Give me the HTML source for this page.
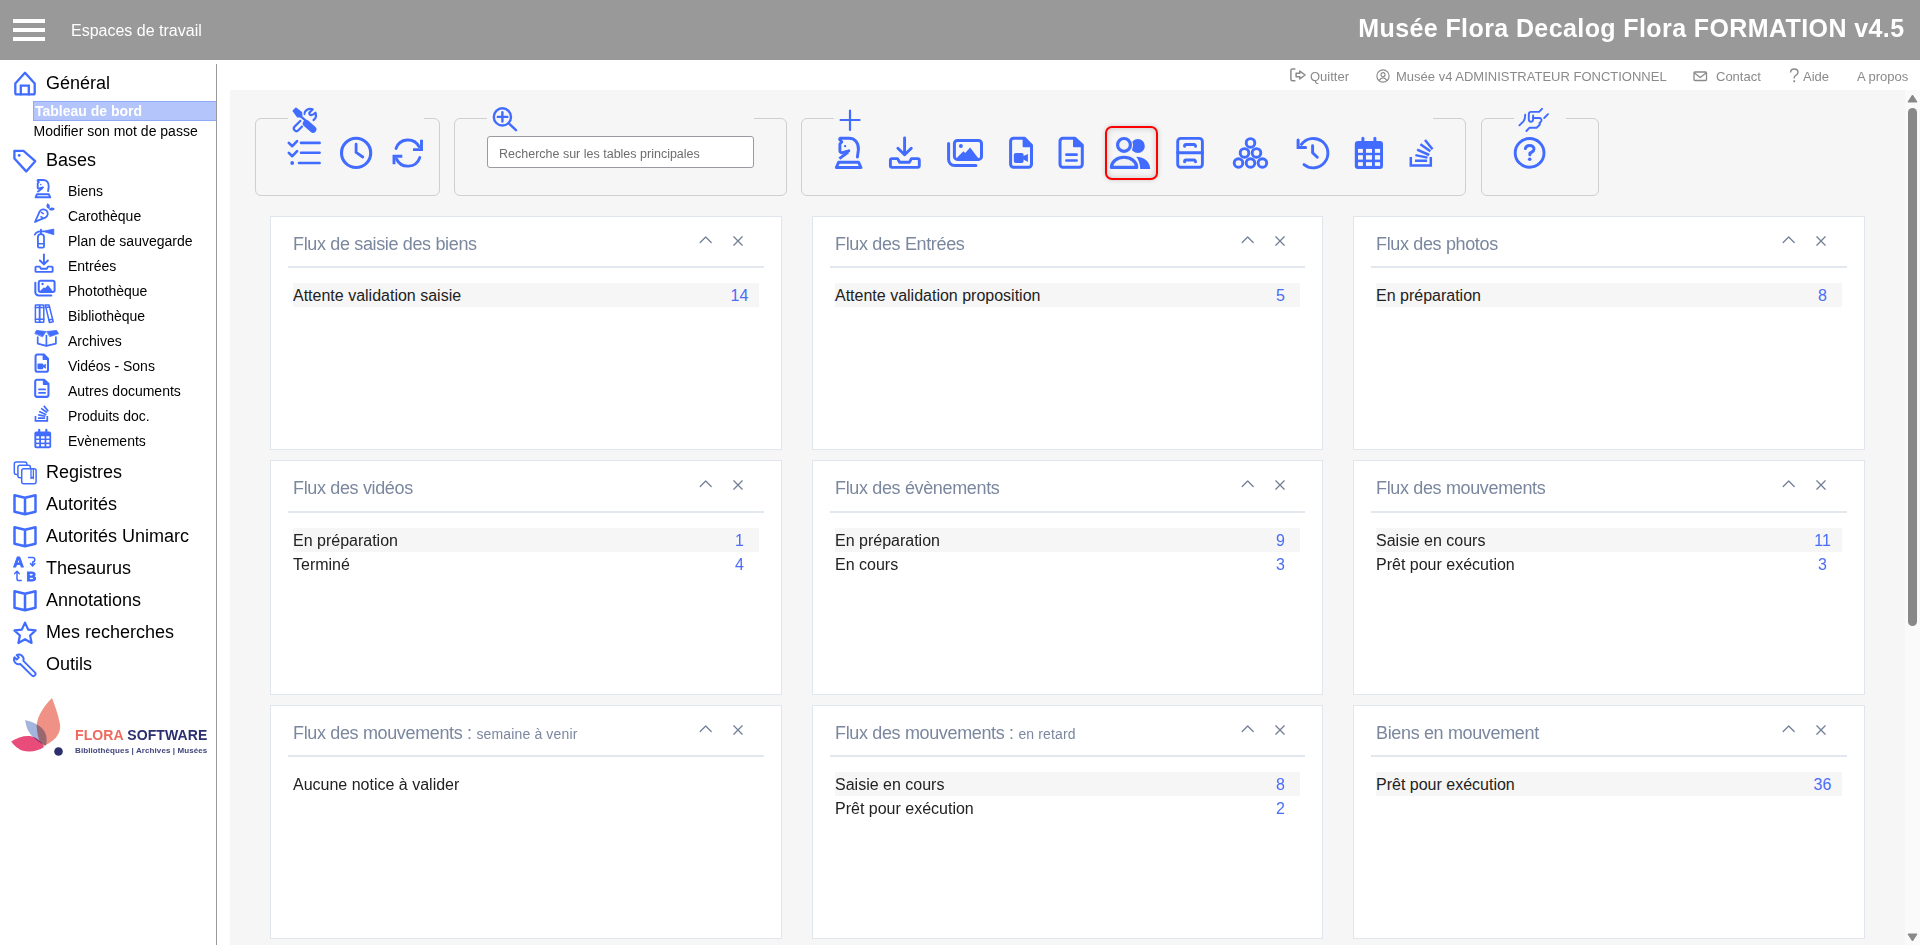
<!DOCTYPE html><html><head><meta charset="utf-8"><title>Flora</title><style>
*{margin:0;padding:0;box-sizing:border-box}
html,body{width:1920px;height:945px;overflow:hidden;background:#fff;font-family:"Liberation Sans", sans-serif}
.a{position:absolute}
</style></head><body>
<div class="a" style="left:0;top:0;width:1920px;height:60px;background:#999"></div>
<div class="a" style="left:13px;top:19px;width:32px;height:4px;background:#fff"></div>
<div class="a" style="left:13px;top:28px;width:32px;height:4px;background:#fff"></div>
<div class="a" style="left:13px;top:37px;width:32px;height:4px;background:#fff"></div>
<div style="position:absolute;left:71px;top:23.46px;font-size:16px;line-height:16px;color:#fff;font-weight:normal;white-space:nowrap;">Espaces de travail</div>
<div class="a" style="right:15.5px;top:16.4px;font-size:25px;line-height:25px;font-weight:bold;color:#fff;white-space:nowrap;letter-spacing:0.4px">Musée Flora Decalog Flora FORMATION v4.5</div>
<div style="position:absolute;left:1310px;top:70.00px;font-size:13px;line-height:13px;color:#8a8a8a;font-weight:normal;white-space:nowrap;">Quitter</div>
<div style="position:absolute;left:1396px;top:70.00px;font-size:13px;line-height:13px;color:#8a8a8a;font-weight:normal;white-space:nowrap;">Musée v4 ADMINISTRATEUR FONCTIONNEL</div>
<div style="position:absolute;left:1716px;top:70.00px;font-size:13px;line-height:13px;color:#8a8a8a;font-weight:normal;white-space:nowrap;">Contact</div>
<div style="position:absolute;left:1803px;top:70.00px;font-size:13px;line-height:13px;color:#8a8a8a;font-weight:normal;white-space:nowrap;">Aide</div>
<div style="position:absolute;left:1857px;top:70.00px;font-size:13px;line-height:13px;color:#8a8a8a;font-weight:normal;white-space:nowrap;">A propos</div>
<svg class="a" style="left:0;top:0" width="1920" height="100" viewBox="0 0 1920 100" fill="none" stroke="#8a8a8a" stroke-width="1.4"><path d="M1790.6 72.4C1790.6 70.2 1792.2 69 1794.3 69C1796.5 69 1798 70.4 1798 72.3C1798 74.6 1795.9 75.2 1794.6 76.4C1794.2 76.8 1794.2 77.6 1794.2 78.6"/><path d="M1794.2 80.3V82.2" stroke-width="1.8"/></svg>
<svg class="a" style="left:1280px;top:60px" width="40" height="30" viewBox="1280 60 40 30" fill="none" stroke="#8a8a8a" stroke-width="1.5" stroke-linejoin="round"><path d="M1295.4 69H1292.4A1.5 1.5 0 0 0 1290.9 70.5V79.3A1.5 1.5 0 0 0 1292.4 80.8H1295.4"/><path d="M1296.1 73.3H1299.8V71.1L1305.1 75L1299.8 78.9V76.7H1296.1z"/></svg>
<svg style="position:absolute;left:1376px;top:69.3px" width="14" height="14" viewBox="0 0 16 16" fill="none" stroke="#8a8a8a" stroke-width="1.3" stroke-linecap="round" stroke-linejoin="round" ><circle cx="8" cy="8" r="7"/><circle cx="8" cy="6.5" r="2.3"/><path d="M3.8 13c1-2 2.4-2.8 4.2-2.8s3.2.8 4.2 2.8"/></svg>
<svg style="position:absolute;left:1693px;top:71px" width="14.5" height="10.5" viewBox="0 0 14.5 10.5" fill="none" stroke="#8a8a8a" stroke-width="1.3" stroke-linecap="round" stroke-linejoin="round" ><rect x="1" y="1" width="12.5" height="8.5" rx="1"/><path d="M1.5 2l5.75 4.5 5.75-4.5"/></svg>
<div class="a" style="left:216px;top:64px;width:1px;height:881px;background:#999"></div>
<div class="a" style="left:33px;top:101px;width:183px;height:20px;background:#b4c5fb;border:1px solid #8eaaf8;border-right:none"></div>
<div style="position:absolute;left:46px;top:73.76px;font-size:18px;line-height:18px;color:#000;font-weight:normal;white-space:nowrap;">Général</div>
<div style="position:absolute;left:35px;top:103.75px;font-size:14px;line-height:14px;color:#fff;font-weight:bold;white-space:nowrap;">Tableau de bord</div>
<div style="position:absolute;left:33.5px;top:124.15px;font-size:14px;line-height:14px;color:#000;font-weight:normal;white-space:nowrap;">Modifier son mot de passe</div>
<div style="position:absolute;left:46px;top:150.76px;font-size:18px;line-height:18px;color:#000;font-weight:normal;white-space:nowrap;">Bases</div>
<div style="position:absolute;left:68px;top:184.15px;font-size:14px;line-height:14px;color:#000;font-weight:normal;white-space:nowrap;">Biens</div>
<div style="position:absolute;left:68px;top:209.15px;font-size:14px;line-height:14px;color:#000;font-weight:normal;white-space:nowrap;">Carothèque</div>
<div style="position:absolute;left:68px;top:234.15px;font-size:14px;line-height:14px;color:#000;font-weight:normal;white-space:nowrap;">Plan de sauvegarde</div>
<div style="position:absolute;left:68px;top:259.15px;font-size:14px;line-height:14px;color:#000;font-weight:normal;white-space:nowrap;">Entrées</div>
<div style="position:absolute;left:68px;top:284.15px;font-size:14px;line-height:14px;color:#000;font-weight:normal;white-space:nowrap;">Photothèque</div>
<div style="position:absolute;left:68px;top:309.15px;font-size:14px;line-height:14px;color:#000;font-weight:normal;white-space:nowrap;">Bibliothèque</div>
<div style="position:absolute;left:68px;top:334.15px;font-size:14px;line-height:14px;color:#000;font-weight:normal;white-space:nowrap;">Archives</div>
<div style="position:absolute;left:68px;top:359.15px;font-size:14px;line-height:14px;color:#000;font-weight:normal;white-space:nowrap;">Vidéos - Sons</div>
<div style="position:absolute;left:68px;top:384.15px;font-size:14px;line-height:14px;color:#000;font-weight:normal;white-space:nowrap;">Autres documents</div>
<div style="position:absolute;left:68px;top:409.15px;font-size:14px;line-height:14px;color:#000;font-weight:normal;white-space:nowrap;">Produits doc.</div>
<div style="position:absolute;left:68px;top:434.15px;font-size:14px;line-height:14px;color:#000;font-weight:normal;white-space:nowrap;">Evènements</div>
<div style="position:absolute;left:46px;top:462.76px;font-size:18px;line-height:18px;color:#000;font-weight:normal;white-space:nowrap;">Registres</div>
<div style="position:absolute;left:46px;top:494.76px;font-size:18px;line-height:18px;color:#000;font-weight:normal;white-space:nowrap;">Autorités</div>
<div style="position:absolute;left:46px;top:526.76px;font-size:18px;line-height:18px;color:#000;font-weight:normal;white-space:nowrap;">Autorités Unimarc</div>
<div style="position:absolute;left:46px;top:558.76px;font-size:18px;line-height:18px;color:#000;font-weight:normal;white-space:nowrap;">Thesaurus</div>
<div style="position:absolute;left:46px;top:590.76px;font-size:18px;line-height:18px;color:#000;font-weight:normal;white-space:nowrap;">Annotations</div>
<div style="position:absolute;left:46px;top:622.76px;font-size:18px;line-height:18px;color:#000;font-weight:normal;white-space:nowrap;">Mes recherches</div>
<div style="position:absolute;left:46px;top:654.76px;font-size:18px;line-height:18px;color:#000;font-weight:normal;white-space:nowrap;">Outils</div>
<svg class="a" style="left:0;top:0" width="240" height="700" viewBox="0 0 240 700" fill="none" stroke="#416cff" stroke-linecap="round" stroke-linejoin="round"><path d="M15.3 83.6L25 72.8L34.7 83.6V93A1.4 1.4 0 0 1 33.3 94.4H16.7A1.4 1.4 0 0 1 15.3 93z" stroke-width="2.3"/><path d="M20.8 94.4V85.6H28.8V94.4" stroke-width="2.3" stroke-linejoin="miter"/><path d="M14.4 150.8H23.5L35.2 161.2L26.2 171.4L14.4 158.5z" stroke-width="2.3"/><circle cx="19.2" cy="155.4" r="1.4" fill="#416cff" stroke="none"/><g transform="translate(-461.190 97.822) scale(0.594)"><g transform="translate(830 132)"><path d="M8.6 30.3H28.6L31 35.5H6.3z" stroke-width="3.19"/><path d="M27.4 25L28.4 17.5C28.8 10.5 24.5 6.3 19 6.3H10.2L9.6 7.3L11.8 9.9L9.9 12V18.8C9.9 20.3 11 21 12.5 20.7L18.8 18.8" stroke-width="3.19"/><path d="M18.2 20L9.4 26.6" stroke-width="3.19" stroke-linecap="butt"/><circle cx="15.1" cy="14.1" r="1.32" fill="#416cff" stroke="none"/></g></g><g transform="translate(30 200)"><path d="M5 22C8 20.5 12 19 15.3 17.6C18 16.3 18.6 12.8 16.6 10.6C14.5 8.5 10.8 9 9.6 11.6z" stroke-width="1.8"/><path d="M11.4 12.4L13.3 13.6M10.9 16.8L12.4 17.4" stroke-width="1.5"/><path d="M17.6 4C16.6 5.4 16.8 7.6 18.9 8.3C19.6 6.6 19.2 5 17.6 4z" fill="#416cff" stroke="#416cff" stroke-width="1.2"/><path d="M19.6 9.2C21 10.4 23 10.2 24 9C23 7.9 21 8 19.6 9.2z" fill="#416cff" stroke="#416cff" stroke-width="1.2"/></g><g transform="translate(30 200)"><path d="M7.9 46.4V37.2A3.05 3.05 0 0 1 14 37.2V46.4A1.2 1.2 0 0 1 12.8 47.6H9.1A1.2 1.2 0 0 1 7.9 46.4z" stroke-width="1.8"/><path d="M8 43.8H14" stroke-width="1.6"/><path d="M10.9 29.6V34" stroke-width="1.8"/><path d="M4.8 34.6C6 32.4 8 31.3 10.6 31.3H16" stroke-width="1.8"/><path d="M15.9 30.7L23.8 29.1V34.7L15.9 32.3z" fill="#416cff" stroke="#416cff" stroke-width="0.8"/></g><g transform="translate(-493.428 172.422) scale(0.594)"><g transform="translate(830 132)"><path d="M74.6 6V22.4M67.9 16.2L74.6 22.8L81.3 16.2" stroke-width="3.19"/><path d="M67.6 26.6H62A1.6 1.6 0 0 0 60.4 28.2V33.8A1.6 1.6 0 0 0 62 35.4H87.7A1.6 1.6 0 0 0 89.3 33.8V28.2A1.6 1.6 0 0 0 87.7 26.6H81.4L79.4 30.2H69.6z" stroke-width="3.19"/></g></g><g transform="translate(-519.595 198.685) scale(0.585)"><g transform="translate(940 132)"><rect x="14.4" y="8.4" width="27.1" height="19" rx="3" stroke-width="3.4499999999999997"/><path d="M8.6 11.6V27.4A6 6 0 0 0 14.6 33.6H35.9" stroke-width="3.4499999999999997"/><path d="M16.2 26.4L23.4 19.3L25.2 21L30.1 15.4L38.5 26.4z" fill="#416cff" stroke="none"/><circle cx="20.9" cy="13.9" r="2" fill="#416cff" stroke="none"/></g></g><g transform="translate(30 300)"><rect x="5.4" y="4.9" width="4.2" height="17.4" rx="0.6" stroke-width="1.5"/><rect x="9.6" y="4.9" width="4.2" height="17.4" rx="0.6" stroke-width="1.5"/><path d="M15.3 4.9H19L23.2 21.8L19.5 22.5z" stroke-width="1.5"/><path d="M5.4 7.6H13.8M5.4 19.2H13.8M15.9 7.6L19.6 7M18.8 20L22.5 19.2" stroke-width="1.5"/></g><g transform="translate(30 300)"><path d="M5 33.3L6.3 30.4L15.9 31.5L12.7 36.5z" fill="#416cff" stroke="#416cff" stroke-width="0.8"/><path d="M16.9 31.5L26.5 30.4L28.6 33.6L20.1 36.5z" fill="#416cff" stroke="#416cff" stroke-width="0.8"/><path d="M7.7 37.2V43.6L16.4 45.9L25.9 43.6V37.2" stroke-width="1.7"/><path d="M16.4 35.6V45.6" stroke-width="1.7"/></g><g transform="translate(-565.755 272.285) scale(0.595)"><g transform="translate(940 132)"><path d="M84.6 6.3H73.6A3 3 0 0 0 70.6 9.3V32.2A3 3 0 0 0 73.6 35.2H88.5A3 3 0 0 0 91.5 32.2V13.2z" stroke-width="3.4499999999999997"/><path d="M83.6 7L83.6 14.2H90.8z" fill="#416cff" stroke="#416cff" stroke-width="2.3"/><rect x="73.8" y="21.1" width="9.8" height="9.8" rx="2" fill="#416cff" stroke="none"/><path d="M83 24.2L87.9 21.9V30.1L83 27.3z" fill="#416cff" stroke="none"/></g></g><g transform="translate(-595.505 297.385) scale(0.595)"><g transform="translate(940 132)"><path d="M135 6.3H123A3 3 0 0 0 120 9.3V32.2A3 3 0 0 0 123 35.2H139.3A3 3 0 0 0 142.3 32.2V13.2z" stroke-width="3.4499999999999997"/><path d="M134 7L134 14.2H141.2z" fill="#416cff" stroke="#416cff" stroke-width="2.3"/><path d="M126.4 22.7H136.6M126.4 28.5H136.6" stroke-width="3.105"/></g></g><g transform="translate(-796.887 323.290) scale(0.59)"><g transform="translate(1400 100)"><path d="M10.8 57V65.4H30.8V57" stroke-width="2.875" stroke-linecap="butt" stroke-linejoin="miter"/><path d="M15 60.8H27.1M15.4 55.1L27.5 57.6M17.1 49.6L29.2 55M20.4 44.2L30.4 51.2M25 40L32.5 49.2" stroke-width="2.875" stroke-linecap="butt"/></g></g><g transform="translate(-770.373 347.800) scale(0.594)"><g transform="translate(1290 132)"><rect x="64.8" y="8.9" width="28.2" height="28.1" rx="3.2" fill="#416cff" stroke="none"/><path d="M72.9 6.2V9.5M84.9 6.2V9.5" stroke-width="3.5999999999999996"/><rect x="68" y="16.9" width="4.9" height="3.9" fill="#fff" stroke="none"/><rect x="68" y="23.2" width="4.9" height="4.4" fill="#fff" stroke="none"/><rect x="68" y="30.2" width="4.9" height="3.7" fill="#fff" stroke="none"/><rect x="76" y="16.9" width="6" height="3.9" fill="#fff" stroke="none"/><rect x="76" y="23.2" width="6" height="4.4" fill="#fff" stroke="none"/><rect x="76" y="30.2" width="6" height="3.7" fill="#fff" stroke="none"/><rect x="84.9" y="16.9" width="5.2" height="3.9" fill="#fff" stroke="none"/><rect x="84.9" y="23.2" width="5.2" height="4.4" fill="#fff" stroke="none"/><rect x="84.9" y="30.2" width="5.2" height="3.7" fill="#fff" stroke="none"/></g></g><rect x="14.3" y="462" width="12.5" height="12.5" rx="2" stroke-width="1.5"/><rect x="17.9" y="465.3" width="12.5" height="12.5" rx="2" fill="#fff" stroke-width="1.5"/><rect x="21.7" y="468.8" width="14.4" height="15" rx="2" fill="#fff" stroke-width="1.5"/><path d="M31 469V478.5L32.2 477.2L33.4 478.5V469" stroke-width="1.3"/><path d="M14.5 495.3L25 497.8V514.3L14.5 511.8z M35.5 495.3L25 497.8V514.3L35.5 511.8z" stroke-width="2.5"/><path d="M14.5 527.3L25 529.8V546.3L14.5 543.8z M35.5 527.3L25 529.8V546.3L35.5 543.8z" stroke-width="2.5"/><path d="M14.5 591.3L25 593.8V610.3L14.5 607.8z M35.5 591.3L25 593.8V610.3L35.5 607.8z" stroke-width="2.5"/><text x="13.3" y="567.2" font-family="Liberation Sans" font-weight="bold" font-size="14.5" fill="#416cff" stroke-width="0.9" stroke-linejoin="miter">A</text><text x="26.4" y="581" font-family="Liberation Sans" font-weight="bold" font-size="13.5" fill="#416cff" stroke-width="0.9" stroke-linejoin="miter">B</text><path d="M28.6 557.6H32.6A2.2 2.2 0 0 1 32.6 562V565.8M30.4 563.6L32.6 565.9L34.8 563.6" stroke-width="1.5"/><path d="M21.2 580.6H18.6A1.6 1.6 0 0 1 17 579V571.4M14.8 573.6L17 571.3L19.2 573.6" stroke-width="1.5"/><path d="M25 622.6L28.2 629.6L35.6 630.4L30.1 635.5L31.6 643L25 639.2L18.4 643L19.9 635.5L14.4 630.4L21.8 629.6z" stroke-width="2.2"/><path transform="translate(18.8 659.4) rotate(45)" d="M4.27 -2.2L20.5 -2.2A2.2 2.2 0 0 1 20.5 2.2L4.27 2.2A4.8 4.8 0 0 1 -4.56 1.5L-1.4 1.5L-1.4 -1.5L-4.56 -1.5A4.8 4.8 0 0 1 4.27 -2.2z" stroke-width="1.9"/></svg>
<svg class="a" style="left:8px;top:694px" width="64" height="64" viewBox="0 0 64 64">
<path d="M44 4C34 14 27 26 29 36C30 46 33 50 35.7 52C50 46 54 36 51.5 28C50 20 47 12 44 4z" fill="#ef9184"/>
<path d="M17.2 26C26 28 36 33 38 41C39 45 38.5 49 38 52C30 48 22 42 19 34C18 31 17.5 28.5 17.2 26z" fill="#a3b5dc" style="mix-blend-mode:multiply"/>
<path d="M3.2 47.5C10 43 18 41 24 42.5C30 44 34 49 36 53C30 57 22 59 14 56.5C9 54.5 5 50 3.2 47.5z" fill="#e94b7a" style="mix-blend-mode:multiply"/>
<circle cx="50.5" cy="57.5" r="4.3" fill="#2b2f6b"/>
</svg>
<div class="a" style="left:75px;top:727px;font-size:14px;line-height:16px;font-weight:bold;white-space:nowrap;letter-spacing:0.1px"><span style="color:#ef6a5e">FLORA</span> <span style="color:#2b2f6e">SOFTWARE</span></div>
<div class="a" style="left:75px;top:746px;font-size:8px;line-height:10px;font-weight:bold;white-space:nowrap;color:#41457c;letter-spacing:0.1px">Bibliothèques | Archives | Musées</div>
<div class="a" style="left:230px;top:90px;width:1675px;height:855px;background:#f6f6f6"></div>
<div class="a" style="left:1905px;top:90px;width:15px;height:855px;background:#fafafa"></div>
<svg class="a" style="left:1907px;top:94px" width="11" height="9" viewBox="0 0 11 9"><path d="M5.5 1L10 8H1z" fill="#888" stroke="#888" stroke-linejoin="round"/></svg>
<svg class="a" style="left:1907px;top:933px" width="11" height="9" viewBox="0 0 11 9"><path d="M5.5 8L10 1H1z" fill="#888" stroke="#888" stroke-linejoin="round"/></svg>
<div class="a" style="left:1908px;top:108px;width:9px;height:518px;background:#888;border-radius:5px"></div>
<div class="a" style="left:255px;top:118px;width:185px;height:78px;border:1px solid #cfcfcf;border-radius:6px"></div>
<div class="a" style="left:288px;top:117px;width:136px;height:4px;background:#f6f6f6"></div>
<div class="a" style="left:454px;top:118px;width:333px;height:78px;border:1px solid #cfcfcf;border-radius:6px"></div>
<div class="a" style="left:487px;top:117px;width:267px;height:4px;background:#f6f6f6"></div>
<div class="a" style="left:801px;top:118px;width:665px;height:78px;border:1px solid #cfcfcf;border-radius:6px"></div>
<div class="a" style="left:834px;top:117px;width:599px;height:4px;background:#f6f6f6"></div>
<div class="a" style="left:1481px;top:118px;width:118px;height:78px;border:1px solid #cfcfcf;border-radius:6px"></div>
<div class="a" style="left:1514px;top:117px;width:52px;height:4px;background:#f6f6f6"></div>
<div class="a" style="left:487px;top:136px;width:267px;height:32px;background:#fff;border:1px solid #9a9aa2;border-radius:3px"></div>
<div style="position:absolute;left:499px;top:148.12px;font-size:12.5px;line-height:12.5px;color:#6d6d6d;font-weight:normal;white-space:nowrap;">Recherche sur les tables principales</div>
<div class="a" style="left:1105px;top:126px;width:53px;height:54px;border:2px solid #f00;border-radius:7px;box-shadow:0 0 5px rgba(0,0,0,.18), inset 0 0 6px rgba(0,0,0,.2);background:#f6f6f6"></div>
<svg class="a" style="left:0;top:0" width="1920" height="945" viewBox="0 0 1920 945" fill="none" stroke="#416cff" stroke-linecap="round" stroke-linejoin="round"><g transform="translate(285 104)"><path d="M16 16.2L9.6 22.6A2.6 2.6 0 0 0 13.3 26.3L18.6 21" stroke-width="2.2" stroke-linecap="butt"/><path d="M19.2 10.2C19.6 6.3 23.5 4 27.6 5.4L24.3 8.8C24.3 11.6 27.5 12.2 30.4 8.6C31.6 11.8 30.6 14.6 28.6 16" stroke-width="2.2"/><path d="M8.1 6.8L10.8 4.1 16.6 8.5 16.9 11.5 15.6 13 12.5 12.9z M15.5 12.2L21.5 17.4" fill="#f6f6f6" stroke="#f6f6f6" stroke-width="3.6"/><path d="M21.2 19.4L28 25.4" stroke="#f6f6f6" stroke-width="9"/><path d="M8.1 6.8L10.8 4.1 16.6 8.5 16.9 11.5 15.6 13 12.5 12.9z" fill="#416cff" stroke="#416cff" stroke-width="1.2"/><path d="M15.5 12.2L21.5 17.4" stroke-width="2.2"/><path d="M21.2 19.4L28 25.4" stroke-width="6.8"/></g><path d="M288.8 142.9L292.3 146.2L297.1 141.2M288.8 152.9L292.3 156.2L297.1 151.2" stroke-width="2.6"/><circle cx="292.2" cy="163" r="1.9" fill="#416cff" stroke="none"/><path d="M301 142.9H319.6M301 152.7H319.6M299 163H319.6" stroke-width="2.6"/><circle cx="356.1" cy="152.9" r="14.6" stroke-width="3.1"/><path d="M356.1 144.2V152.4L362.8 157" stroke-width="2.8"/><path d="M396 148.4A12.6 12.6 0 0 1 419 146.6" stroke-width="2.9"/><path d="M421.5 139.8V149.6H413" stroke-width="2.9" stroke-linecap="butt" stroke-linejoin="miter"/><path d="M419.8 157.6A12.6 12.6 0 0 1 396.5 159" stroke-width="2.9"/><path d="M394 164.2V156.2H402.3" stroke-width="2.9" stroke-linecap="butt" stroke-linejoin="miter"/><circle cx="502.4" cy="116.9" r="8.6" stroke-width="2.4"/><path d="M497.8 116.9H507.4M502.4 112.3V121.6M509.3 123.8L516 130.2" stroke-width="2.4"/><path d="M850 110.6V130M840.6 120H859.6" stroke-width="2.2"/><g transform="translate(830 132)"><path d="M8.6 30.3H28.6L31 35.5H6.3z" stroke-width="2.9"/><path d="M27.4 25L28.4 17.5C28.8 10.5 24.5 6.3 19 6.3H10.2L9.6 7.3L11.8 9.9L9.9 12V18.8C9.9 20.3 11 21 12.5 20.7L18.8 18.8" stroke-width="2.9"/><path d="M18.2 20L9.4 26.6" stroke-width="2.9" stroke-linecap="butt"/><circle cx="15.1" cy="14.1" r="1.2" fill="#416cff" stroke="none"/></g><g transform="translate(830 132)"><path d="M74.6 6V22.4M67.9 16.2L74.6 22.8L81.3 16.2" stroke-width="2.9"/><path d="M67.6 26.6H62A1.6 1.6 0 0 0 60.4 28.2V33.8A1.6 1.6 0 0 0 62 35.4H87.7A1.6 1.6 0 0 0 89.3 33.8V28.2A1.6 1.6 0 0 0 87.7 26.6H81.4L79.4 30.2H69.6z" stroke-width="2.9"/></g><g transform="translate(940 132)"><rect x="14.4" y="8.4" width="27.1" height="19" rx="3" stroke-width="3"/><path d="M8.6 11.6V27.4A6 6 0 0 0 14.6 33.6H35.9" stroke-width="3"/><path d="M16.2 26.4L23.4 19.3L25.2 21L30.1 15.4L38.5 26.4z" fill="#416cff" stroke="none"/><circle cx="20.9" cy="13.9" r="2" fill="#416cff" stroke="none"/></g><g transform="translate(940 132)"><path d="M84.6 6.3H73.6A3 3 0 0 0 70.6 9.3V32.2A3 3 0 0 0 73.6 35.2H88.5A3 3 0 0 0 91.5 32.2V13.2z" stroke-width="3"/><path d="M83.6 7L83.6 14.2H90.8z" fill="#416cff" stroke="#416cff" stroke-width="2"/><rect x="73.8" y="21.1" width="9.8" height="9.8" rx="2" fill="#416cff" stroke="none"/><path d="M83 24.2L87.9 21.9V30.1L83 27.3z" fill="#416cff" stroke="none"/></g><g transform="translate(940 132)"><path d="M135 6.3H123A3 3 0 0 0 120 9.3V32.2A3 3 0 0 0 123 35.2H139.3A3 3 0 0 0 142.3 32.2V13.2z" stroke-width="3"/><path d="M134 7L134 14.2H141.2z" fill="#416cff" stroke="#416cff" stroke-width="2"/><path d="M126.4 22.7H136.6M126.4 28.5H136.6" stroke-width="2.7"/></g><circle cx="1137.8" cy="146" r="7" fill="#416cff" stroke="none"/><path d="M1136.2 156.7C1144.2 156.7 1150.2 162 1150.2 169H1140.2C1140.2 164 1138.7 160 1136.2 156.7z" fill="#416cff" stroke="none"/><circle cx="1124" cy="144.9" r="6.4" fill="#f2f2f2" stroke="#f2f2f2" stroke-width="5.5"/><path d="M1111.4 167.4A12.65 10.2 0 0 1 1136.7 167.4z" fill="#f2f2f2" stroke="#f2f2f2" stroke-width="5.5" stroke-linejoin="round"/><circle cx="1124" cy="144.9" r="6.4" stroke-width="3.2"/><path d="M1111.4 167.4A12.65 10.2 0 0 1 1136.7 167.4z" stroke-width="3.2"/><g transform="translate(1170 132)"><rect x="7.7" y="6.4" width="24.7" height="28.9" rx="3" stroke-width="2.9"/><path d="M7.7 20.8H32.4" stroke-width="2.9"/><path d="M14.6 14.4V13.9A1.4 1.4 0 0 1 16 12.5H24.1A1.4 1.4 0 0 1 25.5 13.9V14.4M14.6 29.9V29.4A1.4 1.4 0 0 1 16 28H24.1A1.4 1.4 0 0 1 25.5 29.4V29.9" stroke-width="2.9"/></g><g transform="translate(1170 132)"><circle cx="80.5" cy="10.9" r="4.3" stroke-width="2.9"/><circle cx="74.5" cy="20.9" r="4.3" stroke-width="2.9"/><circle cx="86.5" cy="20.9" r="4.3" stroke-width="2.9"/><circle cx="68.5" cy="31" r="4.3" stroke-width="2.9"/><circle cx="80.5" cy="31" r="4.3" stroke-width="2.9"/><circle cx="92.4" cy="31" r="4.3" stroke-width="2.9"/></g><g transform="translate(1290 132)"><path d="M11.4 12.4A14.7 14.7 0 1 1 14 32.6" stroke-width="2.9"/><path d="M8.1 8.1V15.6H15.6" stroke-width="3" stroke-linecap="round" stroke-linejoin="miter"/><path d="M22.6 13.8V20.8L27.3 25.3" stroke-width="2.9"/></g><g transform="translate(1290 132)"><rect x="64.8" y="8.9" width="28.2" height="28.1" rx="3.2" fill="#416cff" stroke="none"/><path d="M72.9 6.2V9.5M84.9 6.2V9.5" stroke-width="3"/><rect x="68" y="16.9" width="4.9" height="3.9" fill="#f6f6f6" stroke="none"/><rect x="68" y="23.2" width="4.9" height="4.4" fill="#f6f6f6" stroke="none"/><rect x="68" y="30.2" width="4.9" height="3.7" fill="#f6f6f6" stroke="none"/><rect x="76" y="16.9" width="6" height="3.9" fill="#f6f6f6" stroke="none"/><rect x="76" y="23.2" width="6" height="4.4" fill="#f6f6f6" stroke="none"/><rect x="76" y="30.2" width="6" height="3.7" fill="#f6f6f6" stroke="none"/><rect x="84.9" y="16.9" width="5.2" height="3.9" fill="#f6f6f6" stroke="none"/><rect x="84.9" y="23.2" width="5.2" height="4.4" fill="#f6f6f6" stroke="none"/><rect x="84.9" y="30.2" width="5.2" height="3.7" fill="#f6f6f6" stroke="none"/></g><g transform="translate(1400 100)"><path d="M10.8 57V65.4H30.8V57" stroke-width="2.5" stroke-linecap="butt" stroke-linejoin="miter"/><path d="M15 60.8H27.1M15.4 55.1L27.5 57.6M17.1 49.6L29.2 55M20.4 44.2L30.4 51.2M25 40L32.5 49.2" stroke-width="2.5" stroke-linecap="butt"/></g><g transform="translate(1400 100)"><circle cx="129.6" cy="52.9" r="14.4" stroke-width="2.9"/><path d="M125.4 48.6C125.8 46.4 127.5 45.4 129.6 45.4C132 45.4 134 47 134 49.2C134 51.4 131.6 52 129.9 53.3V54.8" stroke-width="3"/><circle cx="129.7" cy="59.2" r="1.8" fill="#416cff" stroke="none"/></g><path d="M1519.4 125.3L1523.6 121.1C1525 119.5 1525.2 117 1525.2 114.8" stroke-width="1.9"/><path d="M1542 108.8L1539.1 111.9H1531.2A2.4 2.4 0 0 0 1528.8 114.3V119.6A2.15 2.15 0 0 0 1533.1 119.6V115.4" stroke-width="1.9"/><path d="M1533.1 118H1539.4A2.2 2.2 0 0 1 1540.6 122L1539.4 122.9C1540 123.6 1540 124.6 1539.2 125.3L1536.6 127.8H1529.3L1526.4 131" stroke-width="1.9"/><path d="M1544.2 118L1548 114.2" stroke-width="1.9"/></svg>
<div class="a" style="left:270px;top:216px;width:512px;height:234px;background:#fff;border:1px solid #e1e5ec"></div>
<div style="position:absolute;left:293px;top:234.76px;font-size:18px;line-height:18px;color:#7a879e;font-weight:normal;white-space:nowrap;letter-spacing:-0.35px">Flux de saisie des biens</div>
<svg style="position:absolute;left:699px;top:235px" width="14" height="10" viewBox="0 0 14 10" fill="none" stroke="#717e94" stroke-width="1.25" stroke-linecap="round" stroke-linejoin="round" ><path d="M1.2 7.5L6.7 2 12.2 7.5"/></svg>
<svg style="position:absolute;left:732px;top:235px" width="12" height="12" viewBox="0 0 12 12" fill="none" stroke="#717e94" stroke-width="1.25" stroke-linecap="round" stroke-linejoin="round" ><path d="M1.8 1.8l8.4 8.4M10.2 1.8l-8.4 8.4"/></svg>
<div class="a" style="left:288px;top:266px;width:476px;height:2px;background:#e3e7ee"></div>
<div class="a" style="left:293px;top:283px;width:466px;height:24px;background:#f6f6f6"></div>
<div style="position:absolute;left:293px;top:288.46px;font-size:16px;line-height:16px;color:#222;font-weight:normal;white-space:nowrap;">Attente validation saisie</div>
<div class="a" style="left:709.5px;top:288.46px;width:60px;text-align:center;font-size:16px;line-height:16px;color:#4a6cf7">14</div>
<div class="a" style="left:812px;top:216px;width:511px;height:234px;background:#fff;border:1px solid #e1e5ec"></div>
<div style="position:absolute;left:835px;top:234.76px;font-size:18px;line-height:18px;color:#7a879e;font-weight:normal;white-space:nowrap;letter-spacing:-0.35px">Flux des Entrées</div>
<svg style="position:absolute;left:1241px;top:235px" width="14" height="10" viewBox="0 0 14 10" fill="none" stroke="#717e94" stroke-width="1.25" stroke-linecap="round" stroke-linejoin="round" ><path d="M1.2 7.5L6.7 2 12.2 7.5"/></svg>
<svg style="position:absolute;left:1274px;top:235px" width="12" height="12" viewBox="0 0 12 12" fill="none" stroke="#717e94" stroke-width="1.25" stroke-linecap="round" stroke-linejoin="round" ><path d="M1.8 1.8l8.4 8.4M10.2 1.8l-8.4 8.4"/></svg>
<div class="a" style="left:830px;top:266px;width:475px;height:2px;background:#e3e7ee"></div>
<div class="a" style="left:835px;top:283px;width:465px;height:24px;background:#f6f6f6"></div>
<div style="position:absolute;left:835px;top:288.46px;font-size:16px;line-height:16px;color:#222;font-weight:normal;white-space:nowrap;">Attente validation proposition</div>
<div class="a" style="left:1250.5px;top:288.46px;width:60px;text-align:center;font-size:16px;line-height:16px;color:#4a6cf7">5</div>
<div class="a" style="left:1353px;top:216px;width:512px;height:234px;background:#fff;border:1px solid #e1e5ec"></div>
<div style="position:absolute;left:1376px;top:234.76px;font-size:18px;line-height:18px;color:#7a879e;font-weight:normal;white-space:nowrap;letter-spacing:-0.35px">Flux des photos</div>
<svg style="position:absolute;left:1782px;top:235px" width="14" height="10" viewBox="0 0 14 10" fill="none" stroke="#717e94" stroke-width="1.25" stroke-linecap="round" stroke-linejoin="round" ><path d="M1.2 7.5L6.7 2 12.2 7.5"/></svg>
<svg style="position:absolute;left:1815px;top:235px" width="12" height="12" viewBox="0 0 12 12" fill="none" stroke="#717e94" stroke-width="1.25" stroke-linecap="round" stroke-linejoin="round" ><path d="M1.8 1.8l8.4 8.4M10.2 1.8l-8.4 8.4"/></svg>
<div class="a" style="left:1371px;top:266px;width:476px;height:2px;background:#e3e7ee"></div>
<div class="a" style="left:1376px;top:283px;width:466px;height:24px;background:#f6f6f6"></div>
<div style="position:absolute;left:1376px;top:288.46px;font-size:16px;line-height:16px;color:#222;font-weight:normal;white-space:nowrap;">En préparation</div>
<div class="a" style="left:1792.5px;top:288.46px;width:60px;text-align:center;font-size:16px;line-height:16px;color:#4a6cf7">8</div>
<div class="a" style="left:270px;top:460px;width:512px;height:235px;background:#fff;border:1px solid #e1e5ec"></div>
<div style="position:absolute;left:293px;top:478.76px;font-size:18px;line-height:18px;color:#7a879e;font-weight:normal;white-space:nowrap;letter-spacing:-0.35px">Flux des vidéos</div>
<svg style="position:absolute;left:699px;top:479px" width="14" height="10" viewBox="0 0 14 10" fill="none" stroke="#717e94" stroke-width="1.25" stroke-linecap="round" stroke-linejoin="round" ><path d="M1.2 7.5L6.7 2 12.2 7.5"/></svg>
<svg style="position:absolute;left:732px;top:479px" width="12" height="12" viewBox="0 0 12 12" fill="none" stroke="#717e94" stroke-width="1.25" stroke-linecap="round" stroke-linejoin="round" ><path d="M1.8 1.8l8.4 8.4M10.2 1.8l-8.4 8.4"/></svg>
<div class="a" style="left:288px;top:511px;width:476px;height:2px;background:#e3e7ee"></div>
<div class="a" style="left:293px;top:528px;width:466px;height:24px;background:#f6f6f6"></div>
<div style="position:absolute;left:293px;top:533.46px;font-size:16px;line-height:16px;color:#222;font-weight:normal;white-space:nowrap;">En préparation</div>
<div class="a" style="left:709.5px;top:533.46px;width:60px;text-align:center;font-size:16px;line-height:16px;color:#4a6cf7">1</div>
<div style="position:absolute;left:293px;top:557.46px;font-size:16px;line-height:16px;color:#222;font-weight:normal;white-space:nowrap;">Terminé</div>
<div class="a" style="left:709.5px;top:557.46px;width:60px;text-align:center;font-size:16px;line-height:16px;color:#4a6cf7">4</div>
<div class="a" style="left:812px;top:460px;width:511px;height:235px;background:#fff;border:1px solid #e1e5ec"></div>
<div style="position:absolute;left:835px;top:478.76px;font-size:18px;line-height:18px;color:#7a879e;font-weight:normal;white-space:nowrap;letter-spacing:-0.35px">Flux des évènements</div>
<svg style="position:absolute;left:1241px;top:479px" width="14" height="10" viewBox="0 0 14 10" fill="none" stroke="#717e94" stroke-width="1.25" stroke-linecap="round" stroke-linejoin="round" ><path d="M1.2 7.5L6.7 2 12.2 7.5"/></svg>
<svg style="position:absolute;left:1274px;top:479px" width="12" height="12" viewBox="0 0 12 12" fill="none" stroke="#717e94" stroke-width="1.25" stroke-linecap="round" stroke-linejoin="round" ><path d="M1.8 1.8l8.4 8.4M10.2 1.8l-8.4 8.4"/></svg>
<div class="a" style="left:830px;top:511px;width:475px;height:2px;background:#e3e7ee"></div>
<div class="a" style="left:835px;top:528px;width:465px;height:24px;background:#f6f6f6"></div>
<div style="position:absolute;left:835px;top:533.46px;font-size:16px;line-height:16px;color:#222;font-weight:normal;white-space:nowrap;">En préparation</div>
<div class="a" style="left:1250.5px;top:533.46px;width:60px;text-align:center;font-size:16px;line-height:16px;color:#4a6cf7">9</div>
<div style="position:absolute;left:835px;top:557.46px;font-size:16px;line-height:16px;color:#222;font-weight:normal;white-space:nowrap;">En cours</div>
<div class="a" style="left:1250.5px;top:557.46px;width:60px;text-align:center;font-size:16px;line-height:16px;color:#4a6cf7">3</div>
<div class="a" style="left:1353px;top:460px;width:512px;height:235px;background:#fff;border:1px solid #e1e5ec"></div>
<div style="position:absolute;left:1376px;top:478.76px;font-size:18px;line-height:18px;color:#7a879e;font-weight:normal;white-space:nowrap;letter-spacing:-0.35px">Flux des mouvements</div>
<svg style="position:absolute;left:1782px;top:479px" width="14" height="10" viewBox="0 0 14 10" fill="none" stroke="#717e94" stroke-width="1.25" stroke-linecap="round" stroke-linejoin="round" ><path d="M1.2 7.5L6.7 2 12.2 7.5"/></svg>
<svg style="position:absolute;left:1815px;top:479px" width="12" height="12" viewBox="0 0 12 12" fill="none" stroke="#717e94" stroke-width="1.25" stroke-linecap="round" stroke-linejoin="round" ><path d="M1.8 1.8l8.4 8.4M10.2 1.8l-8.4 8.4"/></svg>
<div class="a" style="left:1371px;top:511px;width:476px;height:2px;background:#e3e7ee"></div>
<div class="a" style="left:1376px;top:528px;width:466px;height:24px;background:#f6f6f6"></div>
<div style="position:absolute;left:1376px;top:533.46px;font-size:16px;line-height:16px;color:#222;font-weight:normal;white-space:nowrap;">Saisie en cours</div>
<div class="a" style="left:1792.5px;top:533.46px;width:60px;text-align:center;font-size:16px;line-height:16px;color:#4a6cf7">11</div>
<div style="position:absolute;left:1376px;top:557.46px;font-size:16px;line-height:16px;color:#222;font-weight:normal;white-space:nowrap;">Prêt pour exécution</div>
<div class="a" style="left:1792.5px;top:557.46px;width:60px;text-align:center;font-size:16px;line-height:16px;color:#4a6cf7">3</div>
<div class="a" style="left:270px;top:705px;width:512px;height:234px;background:#fff;border:1px solid #e1e5ec"></div>
<div style="position:absolute;left:293px;top:723.76px;font-size:18px;line-height:18px;color:#7a879e;font-weight:normal;white-space:nowrap;letter-spacing:-0.35px">Flux des mouvements : <span style="font-size:14px;letter-spacing:0.15px">semaine à venir</span></div>
<svg style="position:absolute;left:699px;top:724px" width="14" height="10" viewBox="0 0 14 10" fill="none" stroke="#717e94" stroke-width="1.25" stroke-linecap="round" stroke-linejoin="round" ><path d="M1.2 7.5L6.7 2 12.2 7.5"/></svg>
<svg style="position:absolute;left:732px;top:724px" width="12" height="12" viewBox="0 0 12 12" fill="none" stroke="#717e94" stroke-width="1.25" stroke-linecap="round" stroke-linejoin="round" ><path d="M1.8 1.8l8.4 8.4M10.2 1.8l-8.4 8.4"/></svg>
<div class="a" style="left:288px;top:755px;width:476px;height:2px;background:#e3e7ee"></div>
<div style="position:absolute;left:293px;top:777.46px;font-size:16px;line-height:16px;color:#222;font-weight:normal;white-space:nowrap;">Aucune notice à valider</div>
<div class="a" style="left:812px;top:705px;width:511px;height:234px;background:#fff;border:1px solid #e1e5ec"></div>
<div style="position:absolute;left:835px;top:723.76px;font-size:18px;line-height:18px;color:#7a879e;font-weight:normal;white-space:nowrap;letter-spacing:-0.35px">Flux des mouvements : <span style="font-size:14px;letter-spacing:0.15px">en retard</span></div>
<svg style="position:absolute;left:1241px;top:724px" width="14" height="10" viewBox="0 0 14 10" fill="none" stroke="#717e94" stroke-width="1.25" stroke-linecap="round" stroke-linejoin="round" ><path d="M1.2 7.5L6.7 2 12.2 7.5"/></svg>
<svg style="position:absolute;left:1274px;top:724px" width="12" height="12" viewBox="0 0 12 12" fill="none" stroke="#717e94" stroke-width="1.25" stroke-linecap="round" stroke-linejoin="round" ><path d="M1.8 1.8l8.4 8.4M10.2 1.8l-8.4 8.4"/></svg>
<div class="a" style="left:830px;top:755px;width:475px;height:2px;background:#e3e7ee"></div>
<div class="a" style="left:835px;top:772px;width:465px;height:24px;background:#f6f6f6"></div>
<div style="position:absolute;left:835px;top:777.46px;font-size:16px;line-height:16px;color:#222;font-weight:normal;white-space:nowrap;">Saisie en cours</div>
<div class="a" style="left:1250.5px;top:777.46px;width:60px;text-align:center;font-size:16px;line-height:16px;color:#4a6cf7">8</div>
<div style="position:absolute;left:835px;top:801.46px;font-size:16px;line-height:16px;color:#222;font-weight:normal;white-space:nowrap;">Prêt pour exécution</div>
<div class="a" style="left:1250.5px;top:801.46px;width:60px;text-align:center;font-size:16px;line-height:16px;color:#4a6cf7">2</div>
<div class="a" style="left:1353px;top:705px;width:512px;height:234px;background:#fff;border:1px solid #e1e5ec"></div>
<div style="position:absolute;left:1376px;top:723.76px;font-size:18px;line-height:18px;color:#7a879e;font-weight:normal;white-space:nowrap;letter-spacing:-0.35px">Biens en mouvement</div>
<svg style="position:absolute;left:1782px;top:724px" width="14" height="10" viewBox="0 0 14 10" fill="none" stroke="#717e94" stroke-width="1.25" stroke-linecap="round" stroke-linejoin="round" ><path d="M1.2 7.5L6.7 2 12.2 7.5"/></svg>
<svg style="position:absolute;left:1815px;top:724px" width="12" height="12" viewBox="0 0 12 12" fill="none" stroke="#717e94" stroke-width="1.25" stroke-linecap="round" stroke-linejoin="round" ><path d="M1.8 1.8l8.4 8.4M10.2 1.8l-8.4 8.4"/></svg>
<div class="a" style="left:1371px;top:755px;width:476px;height:2px;background:#e3e7ee"></div>
<div class="a" style="left:1376px;top:772px;width:466px;height:24px;background:#f6f6f6"></div>
<div style="position:absolute;left:1376px;top:777.46px;font-size:16px;line-height:16px;color:#222;font-weight:normal;white-space:nowrap;">Prêt pour exécution</div>
<div class="a" style="left:1792.5px;top:777.46px;width:60px;text-align:center;font-size:16px;line-height:16px;color:#4a6cf7">36</div>
</body></html>
